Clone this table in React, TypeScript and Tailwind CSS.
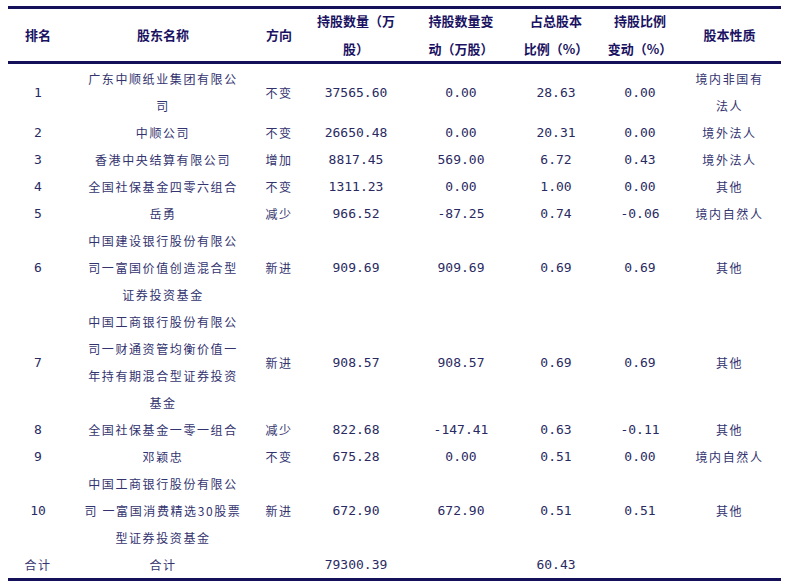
import React from "react";

const CJK = { fontFamily: '"Noto Sans CJK SC", "Noto Sans", sans-serif' };
const MONO = { fontFamily: '"DejaVu Sans Mono", "Liberation Mono", monospace' };

type Row = {
  rank: string;
  name: string[];
  dir: string;
  qty: string;
  chg: string;
  pct: string;
  pctChg: string;
  kind: string[];
};

const rows: Row[] = [
  { rank: "1", name: ["广东中顺纸业集团有限公", "司"], dir: "不变", qty: "37565.60", chg: "0.00", pct: "28.63", pctChg: "0.00", kind: ["境内非国有", "法人"] },
  { rank: "2", name: ["中顺公司"], dir: "不变", qty: "26650.48", chg: "0.00", pct: "20.31", pctChg: "0.00", kind: ["境外法人"] },
  { rank: "3", name: ["香港中央结算有限公司"], dir: "增加", qty: "8817.45", chg: "569.00", pct: "6.72", pctChg: "0.43", kind: ["境外法人"] },
  { rank: "4", name: ["全国社保基金四零六组合"], dir: "不变", qty: "1311.23", chg: "0.00", pct: "1.00", pctChg: "0.00", kind: ["其他"] },
  { rank: "5", name: ["岳勇"], dir: "减少", qty: "966.52", chg: "-87.25", pct: "0.74", pctChg: "-0.06", kind: ["境内自然人"] },
  { rank: "6", name: ["中国建设银行股份有限公", "司一富国价值创造混合型", "证券投资基金"], dir: "新进", qty: "909.69", chg: "909.69", pct: "0.69", pctChg: "0.69", kind: ["其他"] },
  { rank: "7", name: ["中国工商银行股份有限公", "司一财通资管均衡价值一", "年持有期混合型证券投资", "基金"], dir: "新进", qty: "908.57", chg: "908.57", pct: "0.69", pctChg: "0.69", kind: ["其他"] },
  { rank: "8", name: ["全国社保基金一零一组合"], dir: "减少", qty: "822.68", chg: "-147.41", pct: "0.63", pctChg: "-0.11", kind: ["其他"] },
  { rank: "9", name: ["邓颖忠"], dir: "不变", qty: "675.28", chg: "0.00", pct: "0.51", pctChg: "0.00", kind: ["境内自然人"] },
  { rank: "10", name: ["中国工商银行股份有限公", "司 一富国消费精选30股票", "型证券投资基金"], dir: "新进", qty: "672.90", chg: "672.90", pct: "0.51", pctChg: "0.51", kind: ["其他"] },
];

const headers: string[][] = [
  ["排名"],
  ["股东名称"],
  ["方向"],
  ["持股数量（万", "股）"],
  ["持股数量变", "动（万股）"],
  ["占总股本", "比例（%）"],
  ["持股比例", "变动（%）"],
  ["股本性质"],
];

function Lines({ lines }: { lines: string[] }) {
  return (
    <>
      {lines.map((l, i) => (
        <div key={i}>{l}</div>
      ))}
    </>
  );
}

export default function App() {
  const td = "p-0 text-center align-middle whitespace-nowrap leading-[27px]";
  const cjk = `${td} text-[12px] tracking-[1.6px] text-[#33336f]`;
  const num = `${td} text-[13px] text-[#2a2a62]`;

  return (
    <div className="w-[791px] h-[586px] bg-white pt-[6px] pl-[8px]">
      <table className="table-fixed border-collapse w-[773px]">
        <colgroup>
          <col className="w-[60px]" />
          <col className="w-[190px]" />
          <col className="w-[42px]" />
          <col className="w-[112px]" />
          <col className="w-[98px]" />
          <col className="w-[92px]" />
          <col className="w-[76px]" />
          <col className="w-[103px]" />
        </colgroup>
        <thead>
          <tr className="border-t-[3px] border-b-[3px] border-[#15105a] h-[53px]">
            {headers.map((h, i) => (
              <th
                key={i}
                style={CJK}
                className="p-0 text-center align-middle whitespace-nowrap text-[13px] font-bold leading-[28px] text-[#1a1262]"
              >
                <div className="-my-[2px]">
                  <Lines lines={h} />
                </div>
              </th>
            ))}
          </tr>
        </thead>
        <tbody>
          {rows.map((r, i) => (
            <tr key={r.rank} className={i === 0 ? "[&>td]:pt-[1px]" : ""}>
              <td style={MONO} className={num}>{r.rank}</td>
              <td style={CJK} className={cjk}><Lines lines={r.name} /></td>
              <td style={CJK} className={cjk}>{r.dir}</td>
              <td style={MONO} className={num}>{r.qty}</td>
              <td style={MONO} className={num}>{r.chg}</td>
              <td style={MONO} className={num}>{r.pct}</td>
              <td style={MONO} className={num}>{r.pctChg}</td>
              <td style={CJK} className={cjk}><Lines lines={r.kind} /></td>
            </tr>
          ))}
          <tr className="border-b-[3px] border-[#15105a]">
            <td style={CJK} className={cjk}>合计</td>
            <td style={CJK} className={cjk}>合计</td>
            <td className={td}></td>
            <td style={MONO} className={num}>79300.39</td>
            <td className={td}></td>
            <td style={MONO} className={num}>60.43</td>
            <td className={td}></td>
            <td className={td}></td>
          </tr>
        </tbody>
      </table>
    </div>
  );
}
